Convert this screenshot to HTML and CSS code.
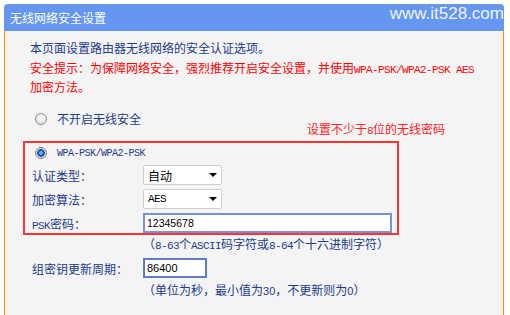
FILE: index.html
```html
<!DOCTYPE html>
<html>
	<head>
		<meta charset="UTF-8">
		<title>无线网络安全设置</title>
		<link rel="stylesheet" href="styles.css">
	</head>
	<body>
		<div class="panel">
			<div class="panel-hd">
				<span class="panel-title">无线网络安全设置</span>
				<span class="watermark">www.it528.com</span>
			</div>
			<div class="panel-bd">
				<p class="intro">本页面设置路由器无线网络的安全认证选项。</p>
				<p class="warn">安全提示：为保障网络安全，强烈推荐开启安全设置，并使用<span class="en">WPA-PSK/WPA2-PSK AES</span><br>加密方法。</p>
				<div class="radio-row">
					<span class="radio"></span>
					<span>不开启无线安全</span>
				</div>
				<div class="note">设置不少于<span class="en">8</span>位的无线密码</div>
				<div class="secure-box">
					<div class="radio-row inner">
						<span class="radio on"></span>
						<span class="wpa">WPA-PSK/WPA2-PSK</span>
					</div>
					<div class="form-row first">
						<span class="label">认证类型：</span>
						<div class="select"><span>自动</span></div>
					</div>
					<div class="form-row">
						<span class="label">加密算法：</span>
						<div class="select"><span class="en">AES</span></div>
					</div>
					<div class="form-row">
						<span class="label"><span class="en">PSK</span>密码：</span>
						<div class="input psk">12345678</div>
					</div>
				</div>
				<p class="hint">（<span class="en">8-63</span>个<span class="en">ASCII</span>码字符或<span class="en">8-64</span>个十六进制字符）</p>
				<div class="form-row period-row">
					<span class="label">组密钥更新周期：</span>
					<div class="input period">86400</div>
				</div>
				<p class="hint hint2">（单位为秒，最小值为<span class="num">30</span>，不更新则为<span class="num">0</span>）</p>
			</div>
		</div>
	</body>
</html>
```

FILE: styles.css
```css
body {
	margin: 0;
	background: #fff;
	font: 12px "Noto Sans CJK SC", sans-serif;
	color: #1d3a8b;
}

p {
	margin: 0;
}

/* half-width latin, like the router's bitmap font */
.en {
	font: 11px "Liberation Mono", monospace;
	letter-spacing: -.6px;
}

.num {
	font: 11px "Liberation Sans", sans-serif;
}

.panel {
	width: 500px;
	margin: 4px 0 0 4px;
}

.panel-hd {
	height: 27px;
	background: #6596f0;
	border-radius: 4px 4px 0 0;
	display: flex;
	align-items: center;
	justify-content: space-between;
	padding-left: 6px;
	color: #fff;
}

.panel-title {
	line-height: 27px;
	margin-top: -1px;
}

.watermark {
	font: 17px "Liberation Sans", sans-serif;
	color: rgba(255, 255, 255, .92);
	margin-top: -7px;
}

.panel-bd {
	position: relative;
	height: 284px;
	box-sizing: border-box;
	background: #f4f4f4;
	border-left: 1px solid #ff8a00;
	border-right: 1px solid #ff8a00;
	padding: 7px 0 0 18px;
}

.intro,
.warn {
	padding-left: 7px;
	line-height: 19px;
	white-space: nowrap;
}

.warn {
	color: #f00;
	margin-top: 1px;
}

.radio-row {
	display: flex;
	align-items: center;
	height: 19px;
	margin-top: 13px;
	padding-left: 12px;
}

.radio {
	width: 12px;
	height: 12px;
	box-sizing: border-box;
	border-radius: 50%;
	border: 1px solid #8f8f8f;
	background: radial-gradient(circle at 50% 40%, #fff, #d4d4d4);
	margin-right: 10px;
}

.radio.on {
	border-color: #7a7a7a;
	background: radial-gradient(circle, #4fb4ff 0 1.5px, #1d4f9e 2.5px 3.5px, #e6e6e6 4.2px);
}

.note {
	position: absolute;
	left: 302px;
	top: 89px;
	color: #f22;
	line-height: 18px;
}

.secure-box {
	width: 376px;
	box-sizing: border-box;
	border: 2px solid #f33;
	padding-left: 7px;
	margin-top: 13px;
}

.radio-row.inner {
	margin-top: 0;
	padding-left: 3px;
	height: 20px;
}

.wpa {
	font: 10px "Liberation Mono", monospace;
	letter-spacing: -.5px;
}

.form-row {
	display: flex;
	align-items: center;
	margin-top: 4px;
}

.form-row.first {
	margin-top: 2px;
}

.label {
	width: 111px;
}

.select {
	width: 79px;
	height: 20px;
	box-sizing: border-box;
	border: 1px solid #cfcfcf;
	border-radius: 2px;
	background: #fff;
	padding: 0 4px;
	display: flex;
	align-items: center;
	justify-content: space-between;
	color: #000;
}

.select::after {
	content: "";
	border-left: 4px solid transparent;
	border-right: 4px solid transparent;
	border-top: 4px solid #000;
}

.input {
	height: 20px;
	box-sizing: border-box;
	border: 2px solid #7893d3;
	background: #fff;
	padding-left: 2px;
	display: flex;
	align-items: center;
	font: 10.5px "Liberation Sans", sans-serif;
	color: #000;
}

.input.psk {
	width: 249px;
}

.input.period {
	width: 64px;
	font-size: 11px;
	border-color: #5f7bc2;
}

.hint {
	padding-left: 120px;
	line-height: 18px;
}

.period-row {
	margin-top: 5px;
	padding-left: 9px;
}

.hint2 {
	margin-top: 3px;
}
```
